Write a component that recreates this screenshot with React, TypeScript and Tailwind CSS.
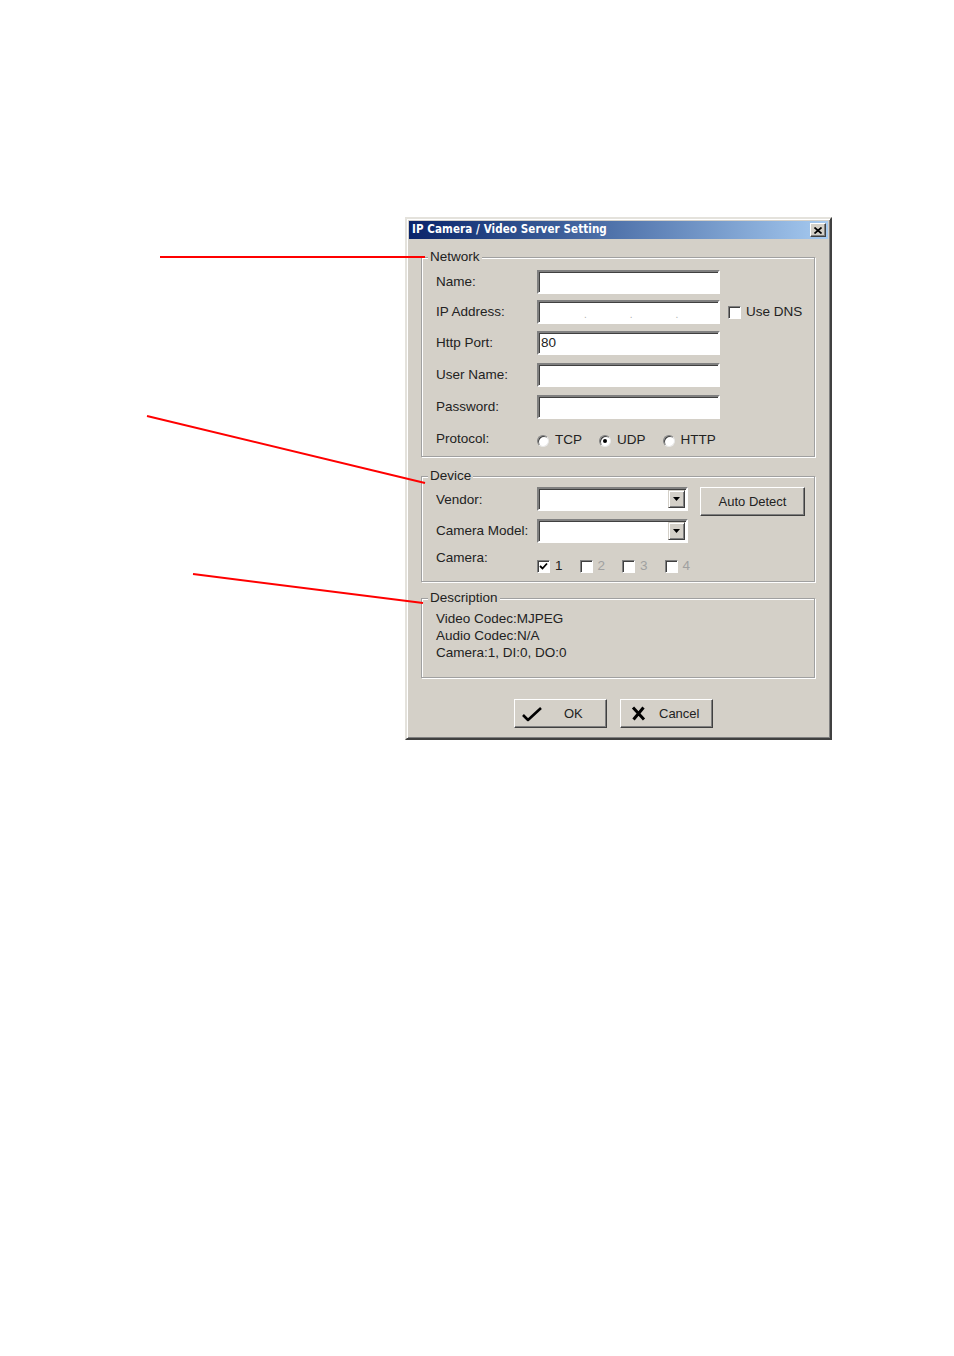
import React from 'react'

const font = { fontFamily: '"Liberation Sans", Arial, sans-serif' }

function Sunken({ className = '', children }: { className?: string; children?: React.ReactNode }) {
  return (
    <div
      className={`shrink-0 border-2 border-t-[#808080] border-l-[#808080] border-b-white border-r-white bg-white shadow-[inset_1px_1px_0_#404040] ${className}`}
    >
      {children}
    </div>
  )
}

function TextBox({ value, children }: { value?: string; children?: React.ReactNode }) {
  return (
    <Sunken className="h-[24px] w-[183px] flex items-center pl-[2px] text-[13.5px] text-[#222]">
      {value}
      {children}
    </Sunken>
  )
}

function Combo() {
  return (
    <Sunken className="h-[24px] w-[151px] flex justify-end pr-[1px] pt-[1px] pb-[1px]">
      <div className="w-[17px] h-full bg-[#d4d0c8] border border-t-[#d4d0c8] border-l-[#d4d0c8] border-b-[#404040] border-r-[#404040] shadow-[inset_1px_1px_0_#fff,inset_-1px_-1px_0_#808080] flex items-center justify-center">
        <svg width="7" height="4" viewBox="0 0 7 4">
          <path d="M0 0h7L3.5 4z" fill="#000" />
        </svg>
      </div>
    </Sunken>
  )
}

function Check({ checked = false, label, disabled = false }: { checked?: boolean; label: string; disabled?: boolean }) {
  return (
    <div className="flex items-center gap-[5px] shrink-0 whitespace-nowrap">
      <div className="w-[13px] h-[13px] border border-t-[#808080] border-l-[#808080] border-b-white border-r-white shadow-[inset_1px_1px_0_#404040] bg-white flex items-center justify-center">
        {checked && (
          <svg width="9" height="9" viewBox="0 0 9 9">
            <path d="M1 4l2.5 2.5L8 1.5" stroke="#000" strokeWidth="1.8" fill="none" />
          </svg>
        )}
      </div>
      <span className={`text-[13.5px] ${disabled ? 'text-[#a0a0a0]' : 'text-[#222]'}`}>{label}</span>
    </div>
  )
}

function Radio({ checked = false, label }: { checked?: boolean; label: string }) {
  return (
    <div className="flex items-center gap-[6px]">
      <div className="w-[12px] h-[12px] rounded-full border border-t-[#808080] border-l-[#808080] border-b-[#e8e8e8] border-r-[#e8e8e8] bg-white shadow-[inset_1px_1px_0_#404040] flex items-center justify-center">
        {checked && <div className="w-[4px] h-[4px] rounded-full bg-black" />}
      </div>
      <span className="text-[13.5px] text-[#222]">{label}</span>
    </div>
  )
}

function Raised({ className = '', children }: { className?: string; children?: React.ReactNode }) {
  return (
    <div
      className={`shrink-0 bg-[#d4d0c8] border border-t-white border-l-white border-b-[#404040] border-r-[#404040] shadow-[inset_-1px_-1px_0_#808080] flex items-center ${className}`}
    >
      {children}
    </div>
  )
}

function Group({ title, className = '', children }: { title: string; className?: string; children?: React.ReactNode }) {
  return (
    <fieldset
      className={`min-w-0 border border-[#a0a0a0] shadow-[inset_1px_1px_0_#fff,1px_1px_0_#fff] px-[14px] ${className}`}
    >
      <legend className="ml-[-8px] px-[2px] bg-[#d4d0c8] text-[13.5px] leading-[16px] text-[#222]">{title}</legend>
      {children}
    </fieldset>
  )
}

function Row({ label, className = '', children }: { label: string; className?: string; children?: React.ReactNode }) {
  return (
    <div className={`flex items-center ${className}`}>
      <span className="w-[101px] shrink-0 text-[13.5px] text-[#222] whitespace-nowrap">{label}</span>
      {children}
    </div>
  )
}

export default function App() {
  return (
    <div className="relative w-[954px] h-[1356px] bg-white pt-[217px] pl-[405px]" style={font}>
      <div className="w-[427px] h-[523px] bg-[#d4d0c8] border-2 border-t-[#e4e2dc] border-l-[#e4e2dc] border-b-[#404040] border-r-[#404040] shadow-[inset_1px_1px_0_#fff,inset_-1px_-1px_0_#808080] p-[2px] flex flex-col">
        {/* title bar */}
        <div className="h-[18px] flex items-center justify-between pl-[3px] pr-[2px] bg-gradient-to-r from-[#0a246a] to-[#a6caf0]">
          <span className="text-white font-bold text-[11.5px] tracking-[0.1px]" style={{ fontFamily: '"DejaVu Sans Condensed", "DejaVu Sans", sans-serif' }}>
            IP Camera / Video Server Setting
          </span>
          <Raised className="w-[16px] h-[14px] justify-center">
            <svg width="8" height="7" viewBox="0 0 8 7">
              <path d="M0.5 0.5L7.5 6.5M7.5 0.5L0.5 6.5" stroke="#000" strokeWidth="1.7" />
            </svg>
          </Raised>
        </div>

        <div className="pl-[12px] pr-[13px] pt-[10px]">
          <Group title="Network" className="pt-[5px] pb-[7px]">
            <Row label="Name:">
              <TextBox />
            </Row>
            <Row label="IP Address:" className="mt-[6px]">
              <TextBox>
                <div className="flex w-full pt-[6px] text-[#b0b0b0] text-[10px] leading-none">
                  <span className="ml-[43px]">.</span>
                  <span className="ml-[43px]">.</span>
                  <span className="ml-[43px]">.</span>
                </div>
              </TextBox>
              <div className="ml-[8px]">
                <Check label="Use DNS" />
              </div>
            </Row>
            <Row label="Http Port:" className="mt-[7px]">
              <TextBox value="80" />
            </Row>
            <Row label="User Name:" className="mt-[8px]">
              <TextBox />
            </Row>
            <Row label="Password:" className="mt-[8px]">
              <TextBox />
            </Row>
            <Row label="Protocol:" className="mt-[10px] h-[20px]">
              <div className="flex items-center gap-[17px] pt-[3px]">
                <Radio label="TCP" />
                <Radio checked label="UDP" />
                <Radio label="HTTP" />
              </div>
            </Row>
          </Group>

          <Group title="Device" className="mt-[11px] pt-[3px] pb-[5px]">
            <div className="flex items-start">
              <span className="w-[101px] shrink-0 h-[26px] flex items-center text-[13.5px] text-[#222]">Vendor:</span>
              <Combo />
              <Raised className="ml-[12px] w-[105px] h-[29px] justify-center text-[13px] text-[#222]">Auto Detect</Raised>
            </div>
            <Row label="Camera Model:" className="mt-[3px]">
              <Combo />
            </Row>
            <div className="flex items-start mt-[7px]">
              <span className="w-[101px] shrink-0 text-[13.5px] leading-[16px] text-[#222]">Camera:</span>
              <div className="flex items-center gap-[17px] mt-[6px]">
                <Check checked label="1" />
                <Check disabled label="2" />
                <Check disabled label="3" />
                <Check disabled label="4" />
              </div>
            </div>
          </Group>

          <Group title="Description" className="mt-[8px] pt-[4px] pb-[16px]">
            <div className="text-[13.5px] leading-[17px] text-[#222]">
              <div>Video Codec:MJPEG</div>
              <div>Audio Codec:N/A</div>
              <div>Camera:1, DI:0, DO:0</div>
            </div>
          </Group>

          <div className="flex gap-[13px] mt-[21px] pl-[93px]">
            <Raised className="w-[93px] h-[29px] text-[13px] text-[#222]">
              <svg width="20" height="16" viewBox="0 0 20 16" className="ml-[7px]">
                <path d="M1 9l5 5L19 2" stroke="#000" strokeWidth="2.6" fill="none" strokeLinejoin="round" />
              </svg>
              <span className="ml-[22px]">OK</span>
            </Raised>
            <Raised className="w-[93px] h-[29px] text-[13px] text-[#222]">
              <svg width="15" height="15" viewBox="0 0 15 15" className="ml-[10px]">
                <path d="M2 1.5L13 13.5M12.5 1.5L2.5 13.5" stroke="#000" strokeWidth="3" fill="none" />
              </svg>
              <span className="ml-[13px]">Cancel</span>
            </Raised>
          </div>
        </div>
      </div>

      {/* annotation lines */}
      <svg className="absolute left-0 top-0 pointer-events-none" width="954" height="1356">
        <line x1="160" y1="257" x2="425" y2="257" stroke="#ff0000" strokeWidth="2" />
        <line x1="147" y1="416" x2="425" y2="483" stroke="#ff0000" strokeWidth="2" />
        <line x1="193" y1="574" x2="423" y2="603" stroke="#ff0000" strokeWidth="2" />
      </svg>
    </div>
  )
}
